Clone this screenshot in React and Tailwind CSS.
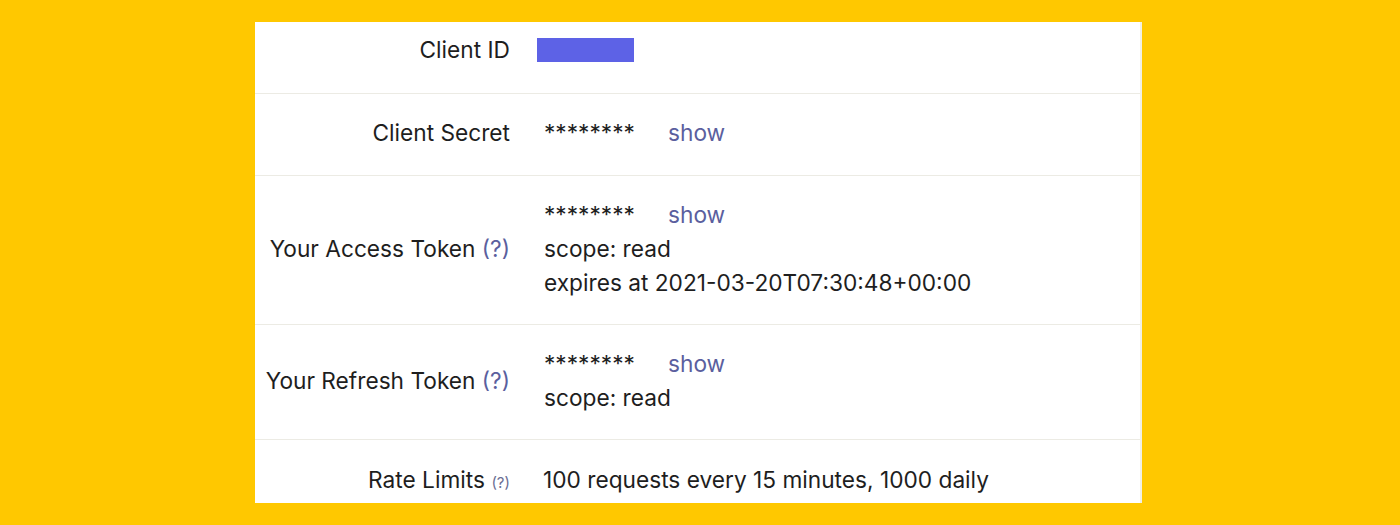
export default function App() {
  const font = { fontFamily: 'Inter, "Noto Sans", sans-serif' };
  const Show = () => <span className="text-[#5b5f9e]">show</span>;
  const Stars = () => <span className="inline-block w-[124px]">********</span>;
  const Q = () => <span className="text-[#5b5f9e]">(?)</span>;
  return (
    <div className="w-[1400px] h-[525px] bg-[#ffc800] overflow-hidden pt-[22px] pl-[255px]" style={font}>
      <div className="w-[887px] h-[481px] bg-white border-r-2 border-[#f1f0e6] overflow-hidden text-[22.7px] leading-[34px] text-[#1e1e1e]">
        <div className="grid grid-cols-[255px_1fr] border-b border-[#ecebe4] pt-[11px] pb-[26px]">
          <div className="text-right">Client ID</div>
          <div className="pl-[27px] flex items-center">
            <div className="w-[97px] h-[24px] bg-[#5d62e6]"></div>
          </div>
        </div>
        <div className="grid grid-cols-[255px_1fr] border-b border-[#ecebe4] pt-[22px] pb-[25px]">
          <div className="text-right">Client Secret</div>
          <div className="pl-[34px]"><Stars /><Show /></div>
        </div>
        <div className="grid grid-cols-[255px_1fr] border-b border-[#ecebe4] pt-[22px] pb-[24px]">
          <div className="text-right self-center">Your Access Token <Q /></div>
          <div className="pl-[34px]">
            <div><Stars /><Show /></div>
            <div>scope: read</div>
            <div>expires at 2021-03-20T07:30:48+00:00</div>
          </div>
        </div>
        <div className="grid grid-cols-[255px_1fr] border-b border-[#ecebe4] pt-[22px] pb-[24px]">
          <div className="text-right self-center">Your Refresh Token <Q /></div>
          <div className="pl-[34px]">
            <div><Stars /><Show /></div>
            <div>scope: read</div>
          </div>
        </div>
        <div className="grid grid-cols-[255px_1fr] pt-[23px] pb-[24px]">
          <div className="text-right">Rate Limits <span className="text-[15px] text-[#6a6d93]">(?)</span></div>
          <div className="pl-[33px]">100 requests every 15 minutes, 1000 daily</div>
        </div>
      </div>
    </div>
  );
}
